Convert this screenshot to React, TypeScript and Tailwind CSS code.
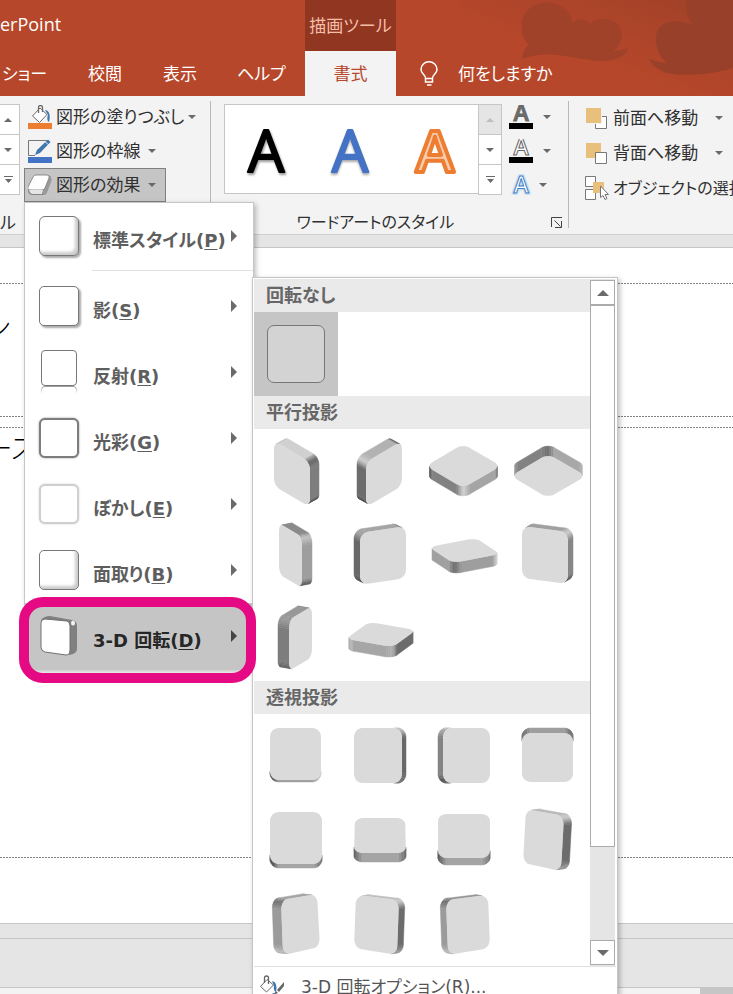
import React from "react";

type Point = [number, number];
type Quad = [Point, Point, Point, Point];

/* ---------- extruded rounded square used by the rotation presets ---------- */

interface SlabProps {
  label: string;
  /** corners of the front face, clockwise */
  face: Quad;
  /** offset of the back face */
  depth: Point;
  /** brightness of: side 1, corner, side 2, corner, side 3, corner, side 4, corner */
  shades: number[];
}

const STEPS = 8;

function outline(quad: Quad) {
  const radius = 0.17;
  const unit: { u: number; v: number }[] = [];
  const centres = [
    { u: 1 - radius, v: radius, from: -90 },
    { u: 1 - radius, v: 1 - radius, from: 0 },
    { u: radius, v: 1 - radius, from: 90 },
    { u: radius, v: radius, from: 180 },
  ];
  centres.forEach((c) => {
    for (let i = 0; i <= STEPS; i++) {
      const a = ((c.from + (90 * i) / STEPS) * Math.PI) / 180;
      unit.push({ u: c.u + radius * Math.cos(a), v: c.v + radius * Math.sin(a) });
    }
  });
  return unit.map(({ u, v }) => {
    const at = (k: 0 | 1) =>
      quad[0][k] * (1 - u) * (1 - v) + quad[1][k] * u * (1 - v) + quad[2][k] * u * v + quad[3][k] * (1 - u) * v;
    return { x: at(0), y: at(1) };
  });
}

function tone(shades: number[], corner: number, f: number) {
  const a = shades[corner * 2];
  const m = shades[corner * 2 + 1];
  const b = shades[(corner * 2 + 2) % 8];
  const value = f < 0.5 ? a + (m - a) * f * 2 : m + (b - m) * (f - 0.5) * 2;
  const n = Math.round(value);
  return `rgb(${n},${n},${n})`;
}

function Slab({ label, face, depth, shades }: SlabProps) {
  const pts = outline(face);
  const [dx, dy] = depth;
  const walls = pts.map((p, i) => {
    const q = pts[(i + 1) % pts.length];
    const facing = (q.y - p.y) * dx - (q.x - p.x) * dy;
    if (facing <= 0) return null;
    const corner = Math.floor(i / (STEPS + 1));
    const step = i % (STEPS + 1);
    const fill = step === STEPS ? tone(shades, corner, 1) : tone(shades, corner, (step + 0.5) / STEPS);
    return (
      <polygon
        key={i}
        points={`${p.x},${p.y} ${q.x},${q.y} ${q.x + dx},${q.y + dy} ${p.x + dx},${p.y + dy}`}
        fill={fill}
        stroke={fill}
        strokeWidth={0.5}
      />
    );
  });
  return (
    <button type="button" aria-label={label} className="size-[84px]">
      <svg viewBox="0 0 84 84" className="size-full" aria-hidden="true">
        {walls}
        <polygon points={pts.map((p) => `${p.x},${p.y}`).join(" ")} fill="#dadada" />
      </svg>
    </button>
  );
}

const parallel: SlabProps[] = [
  { label: "等角投影: 左下", face: [[20, 12], [56, 33], [56, 78], [20, 57]], depth: [9, -5], shades: [208, 100, 125, 70, 120, 120, 120, 190] },
  { label: "等角投影: 右上", face: [[28, 33], [64, 12], [64, 57], [28, 78]], depth: [-9, -5], shades: [178, 90, 120, 120, 120, 50, 108, 205] },
  { label: "等角投影: 上", face: [[41, 15], [79, 37], [41, 59], [4, 37]], depth: [0, 10], shades: [160, 90, 165, 210, 130, 80, 120, 120] },
  { label: "等角投影: 下", face: [[42, 25], [80, 47], [42, 69], [5, 47]], depth: [0, -10], shades: [168, 190, 160, 120, 120, 180, 130, 110] },
  { label: "不等角投影 1: 左", face: [[25, 10], [48, 24], [48, 75], [25, 61]], depth: [10, -2], shades: [138, 195, 158, 90, 120, 120, 120, 130] },
  { label: "不等角投影 1: 右", face: [[22, 20], [68, 13], [68, 65], [22, 72]], depth: [-6, -3], shades: [165, 120, 120, 120, 120, 70, 105, 160] },
  { label: "不等角投影 1: 上", face: [[54, 25], [78, 41], [31, 50], [7, 34]], depth: [0, 11], shades: [160, 215, 158, 105, 160, 150, 120, 120] },
  { label: "不等角投影 2: 左", face: [[16, 13], [62, 19], [62, 71], [16, 65]], depth: [5, -3], shades: [160, 205, 135, 80, 120, 120, 120, 120] },
  { label: "不等角投影 2: 右", face: [[35, 23], [58, 9], [58, 60], [35, 74]], depth: [-11, -2], shades: [152, 120, 120, 120, 120, 95, 125, 150] },
  { label: "不等角投影 2: 上", face: [[31, 25], [78, 33], [55, 50], [8, 42]], depth: [0, 11], shades: [160, 110, 108, 175, 166, 190, 120, 120] },
];

const perspective: SlabProps[] = [
  { label: "透視投影: 前面", face: [[16, 14], [67, 14], [67, 66], [16, 66]], depth: [0, 2], shades: [120, 120, 200, 200, 160, 80, 120, 120] },
  { label: "透視投影: 左", face: [[16, 14], [64, 14], [64, 69], [16, 69]], depth: [4, 0], shades: [200, 185, 105, 110, 120, 120, 120, 120] },
  { label: "透視投影: 右", face: [[21, 14], [68, 14], [68, 69], [21, 69]], depth: [-5, 0], shades: [200, 120, 120, 120, 120, 80, 132, 165] },
  { label: "透視投影: 下", face: [[16, 19], [67, 19], [67, 68], [16, 68]], depth: [0, -5], shades: [158, 110, 120, 120, 120, 120, 120, 110] },
  { label: "透視投影: 上", face: [[16, 14], [68, 14], [68, 66], [16, 66]], depth: [0, 4], shades: [120, 120, 120, 120, 165, 80, 90, 120] },
  { label: "透視投影 (緩い傾斜)", face: [[17, 20], [67, 20], [68, 55], [16, 55]], depth: [0, 9], shades: [120, 120, 90, 120, 164, 120, 90, 120] },
  { label: "透視投影 (急な傾斜)", face: [[16, 16], [68, 16], [68, 60], [16, 60]], depth: [0, 7], shades: [120, 120, 100, 130, 164, 110, 80, 120] },
  { label: "透視投影: 左向き (強)", face: [[20, 11], [58, 18], [55, 73], [17, 65]], depth: [8, -1], shades: [185, 200, 108, 150, 150, 120, 120, 170] },
  { label: "透視投影: 右向き (強)", face: [[27, 18], [63, 12], [66, 65], [29, 73]], depth: [-9, -1], shades: [165, 120, 120, 120, 150, 190, 155, 110] },
  { label: "透視投影: 左向き", face: [[18, 13], [61, 18], [59, 73], [16, 66]], depth: [6, -1], shades: [190, 200, 108, 150, 150, 120, 120, 170] },
  { label: "透視投影: 右向き", face: [[24, 18], [66, 13], [68, 66], [26, 73]], depth: [-6, -1], shades: [150, 120, 120, 120, 150, 190, 155, 110] },
];

/* ------------------------------- small icons ------------------------------- */

function Caret({ up = false, muted = false }: { up?: boolean; muted?: boolean }) {
  return (
    <svg viewBox="0 0 8 4" className="h-1 w-2 shrink-0" aria-hidden="true">
      <path d={up ? "M4 0 8 4H0z" : "M0 0h8L4 4z"} fill={muted ? "#bdbdbd" : "#6a6a6a"} />
    </svg>
  );
}

function MoreCaret() {
  return (
    <svg viewBox="0 0 9 8" className="h-2 w-[9px]" aria-hidden="true">
      <path d="M0 0h9v1H0zM1 3h7L4.500 7z" fill="#6a6a6a" />
    </svg>
  );
}

function FillIcon() {
  return (
    <svg viewBox="0 0 24 24" className="size-6" aria-hidden="true">
      <rect x="0" y="18" width="24" height="6" fill="#ed7d31" />
      <path d="M12 3 4.500 11l7 6.500L19 9.500z" fill="#fff" stroke="#6b6b6b" />
      <path d="M10.500 8V2.500a1.500 1.500 0 0 1 4 0V7" fill="none" stroke="#6b6b6b" strokeWidth="1.300" />
      <path d="M17 5c4 0 6 5 4 12-2-1-2-5-1-7z" fill="#3f76ad" />
    </svg>
  );
}

function OutlineIcon() {
  return (
    <svg viewBox="0 0 24 24" className="size-6" aria-hidden="true">
      <rect x="0" y="18" width="24" height="6" fill="#4472c4" />
      <path d="M19 1.500H.5v15H7" fill="none" stroke="#777" />
      <path d="m7 16 2-5L20 .5 22.500 3 12 14z" fill="#3f76ad" />
      <path d="m17 2.500 3 3" stroke="#f3f3f3" />
    </svg>
  );
}

function EffectIcon() {
  return (
    <svg viewBox="0 0 24 24" className="size-6" aria-hidden="true">
      <path d="M19 3q4-1 4 2 1 2-1 6l-3 8q-1 3-4 3H5q-5 0-5-5z" fill="#858585" />
      <path d="M15 16q3-3 4-13 4-1 4 2 1 2-1 6l-3 8q-1 3-4 3z" fill="#9a9a9a" />
      <path d="M8 2h11q3 0 2 3l-4 10q-1 2-3 2H3q-4 0-3-3L5 4q1-2 3-2z" fill="#fff" stroke="#777" strokeWidth=".8" />
      <path d="M1 17h14l-1 4H5q-3 0-4-4z" fill="#e4e4e4" />
    </svg>
  );
}

function ForwardIcon() {
  return (
    <svg viewBox="0 0 24 24" className="size-6" aria-hidden="true">
      <path d="M10.500 10.500h11v12h-11z" fill="#fff" stroke="#777" />
      <path d="M.5 1.500h16v16H.5z" fill="#e8c07c" stroke="#f3f3f3" />
    </svg>
  );
}

function BackwardIcon() {
  return (
    <svg viewBox="0 0 24 24" className="size-6" aria-hidden="true">
      <path d="M1 2h15v15H1z" fill="#e8c07c" />
      <path d="M10.500 11.500h11v11h-11z" fill="#fff" stroke="#777" />
    </svg>
  );
}

function SelectionIcon() {
  return (
    <svg viewBox="0 0 24 24" className="size-6" aria-hidden="true">
      <path d="M.5.500h10v10H.5zM.5 13.500h10v10H.5z" fill="#fff" stroke="#777" />
      <path d="M8 6h11v11H8z" fill="#e8c07c" />
      <path d="M15.500 10v11.500l2.500-2 2 4 2-1-2-4h3.500z" fill="#fff" stroke="#777" />
    </svg>
  );
}

function FormatIcon() {
  return (
    <svg viewBox="0 0 26 24" className="h-6 w-[26px]" aria-hidden="true">
      <path d="M7 4.500.500 11.500l6 5.500 7-7z" fill="#fff" stroke="#666" />
      <path d="M4.500 8V3q0-2 2-2t2 2v6" fill="none" stroke="#666" strokeWidth="1.300" />
      <path d="M12 6q6 1 4 11-3-2-2-6z" fill="#3f76ad" />
      <path d="m24 7-7 8 2 2 5-6zM16 16l-3 4 5-2z" fill="#666" />
      <circle cx="14" cy="21" r="2.500" fill="#fff" stroke="#3f76ad" />
    </svg>
  );
}

function RotatedIcon() {
  return (
    <svg viewBox="0 0 42 42" className="size-[42px]" aria-hidden="true">
      <path d="M3 5Q6 1 12 1l22 4q5 1 5 6v23q0 5-8 6z" fill="#808080" />
      <path d="M7 4 29 6q3 1 3 5v24q0 5-4 5L7 37q-4-1-4-5V8q0-4 4-4z" fill="#fff" stroke="#707070" />
      <ellipse cx="35" cy="8" rx="2" ry="2.500" fill="#f4f4f4" />
    </svg>
  );
}

function LetterIcon({ kind }: { kind: "fill" | "outline" | "glow" }) {
  return (
    <svg viewBox="0 0 24 24" className="size-6" aria-hidden="true">
      {kind === "glow" && (
        <text x="12" y="20" textAnchor="middle" fontSize="23" fontWeight="600" fill="#fff" stroke="#cfe0f2" strokeWidth="4" strokeLinejoin="round">A</text>
      )}
      <text
        x="12"
        y={kind === "glow" ? 20 : 16}
        textAnchor="middle"
        fontSize="23"
        fontWeight="600"
        fill={kind === "fill" ? "#6a6a6a" : "#fff"}
        stroke={kind === "fill" ? "#6a6a6a" : kind === "outline" ? "#666" : "#3b7fc4"}
        strokeWidth="1"
      >
        A
      </text>
      {kind !== "glow" && <rect x="0" y="18" width="24" height="6" fill="#000" />}
    </svg>
  );
}

/* --------------------------------- ribbon ---------------------------------- */

function GalleryScroll({ muted = false }: { muted?: boolean }) {
  return (
    <div className="flex h-[91px] w-6 shrink-0 flex-col divide-y divide-[#c6c6c6] border border-[#c6c6c6] bg-white">
      <button type="button" aria-label="前の行" className={`flex flex-1 items-center justify-center ${muted ? "bg-[#e5e5e5]" : ""}`}>
        <Caret up muted={muted} />
      </button>
      <button type="button" aria-label="次の行" className="flex flex-1 items-center justify-center">
        <Caret />
      </button>
      <button type="button" aria-label="その他" className="flex flex-1 items-center justify-center">
        <MoreCaret />
      </button>
    </div>
  );
}

function WordArt({ fill, stroke, width, weight, shadow }: { fill: string; stroke: string; width: number; weight: number; shadow: string }) {
  return (
    <button type="button" aria-label="ワードアート" className="flex flex-1 items-center justify-center">
      <svg viewBox="0 0 60 60" className={`size-[60px] ${shadow}`} aria-hidden="true">
        <text x="29" y="53" textAnchor="middle" fontSize="58" fontWeight={weight} fill={fill} stroke={stroke} strokeWidth={width} strokeLinejoin="round">
          A
        </text>
      </svg>
    </button>
  );
}

/* ---------------------------------- menu ----------------------------------- */

const items = [
  { name: "影", hotkey: "S", box: "size-10 rounded-[5px] border border-[#777] bg-white shadow-[2px_2px_2px_#aaa]" },
  { name: "反射", hotkey: "R", box: "reflection" },
  { name: "光彩", hotkey: "G", box: "size-10 rounded-[6px] border-2 border-[#7d7d7d] bg-white shadow-[0_0_2px_#888]" },
  { name: "ぼかし", hotkey: "E", box: "size-10 rounded-[6px] border-2 border-[#cfcfcf] bg-white shadow-[0_0_2px_#ccc]" },
  { name: "面取り", hotkey: "B", box: "size-10 rounded-[5px] border border-[#777] bg-white shadow-[inset_-3px_-3px_3px_#ccc]" },
  { name: "3-D 回転", hotkey: "D", box: "rotated" },
];

function MenuIcon({ box }: { box: string }) {
  if (box === "rotated") return <RotatedIcon />;
  if (box === "reflection")
    return (
      <span className="flex flex-col items-center">
        <span className="size-9 rounded-[4px] border border-[#777] bg-white" />
        <span className="h-2 w-9 rounded-t-[4px] border border-b-0 border-[#999] mask-b-from-0" />
      </span>
    );
  return <span className={box} />;
}

function MenuItem({ name, hotkey, box, active = false }: { name: string; hotkey: string; box: string; active?: boolean }) {
  return (
    <button
      type="button"
      role="menuitem"
      className={`flex h-[66px] w-full items-center pr-4 pl-[13px] text-left text-lg leading-6 font-bold ${active ? "bg-[#c5c5c5] text-[#262626]" : "text-[#5e5e5e]"}`}
    >
      <span className="flex w-[42px] justify-center">
        <MenuIcon box={box} />
      </span>
      <span className="ml-[13px] flex-1 pt-2.5 whitespace-nowrap">
        {name}(<u className="underline-offset-2">{hotkey}</u>)
      </span>
      <svg viewBox="0 0 6 12" className="h-3 w-1.5 shrink-0" aria-hidden="true">
        <path d="M0 0l6 6-6 6z" fill={active ? "#444" : "#6a6a6a"} />
      </svg>
    </button>
  );
}

function Heading({ children }: { children: React.ReactNode }) {
  return <h3 className="flex h-[33px] items-center bg-[#eaeaea] pl-3 text-lg leading-6 font-bold text-[#666]">{children}</h3>;
}

function RotationPanel() {
  return (
    <section aria-label="3-D 回転" className="absolute top-[74px] left-[227px] w-[366px] border border-[#c6c6c6] bg-white p-px shadow-[2px_2px_5px_rgba(0,0,0,0.25)]">
      <div className="flex">
        <div className="w-[336px]">
          <Heading>回転なし</Heading>
          <button type="button" aria-label="回転なし" className="flex size-[84px] items-center justify-center bg-[#c5c5c5]">
            <span className="size-[58px] rounded-[7px] border border-[#777] bg-[#d3d3d3]" />
          </button>
          <Heading>平行投影</Heading>
          <div className="grid grid-cols-4">
            {parallel.map((p) => (
              <Slab key={p.label} {...p} />
            ))}
          </div>
          <Heading>透視投影</Heading>
          <div className="grid grid-cols-4">
            {perspective.map((p) => (
              <Slab key={p.label} {...p} />
            ))}
          </div>
        </div>
        <div className="flex w-[25px] flex-col bg-[#e5e5e5] py-px">
          <button type="button" aria-label="上へスクロール" className="flex h-[25px] items-center justify-center border border-[#ababab] bg-white">
            <svg viewBox="0 0 12 6" className="h-1.5 w-3" aria-hidden="true"><path d="M6 0l6 6H0z" fill="#6a6a6a" /></svg>
          </button>
          <div className="h-[542px] border border-[#ababab] bg-white" />
          <button type="button" aria-label="下へスクロール" className="mt-auto flex h-[25px] items-center justify-center border border-[#ababab] bg-white">
            <svg viewBox="0 0 12 6" className="h-1.5 w-3" aria-hidden="true"><path d="M0 0h12L6 6z" fill="#6a6a6a" /></svg>
          </button>
        </div>
      </div>
      <button type="button" className="flex h-10 w-full items-center border-t border-[#e1e1e1] pl-1.5 text-[17px] leading-6 whitespace-nowrap text-[#555]">
        <FormatIcon />
        <span className="ml-[15px]">3-D 回転オプション(R)...</span>
      </button>
    </section>
  );
}

function EffectsMenu() {
  return (
    <div
      role="menu"
      className="absolute top-full left-0 z-20 w-[230px] border border-[#c6c6c6] bg-white font-['DejaVu_Sans','Noto_Sans_CJK_JP',sans-serif] shadow-[2px_2px_5px_rgba(0,0,0,0.25)]"
    >
      <MenuItem name="標準スタイル" hotkey="P" box="size-10 rounded-[6px] border border-[#777] bg-white shadow-[inset_-3px_-3px_3px_#ccc,2px_2px_2px_#aaa]" />
      <div className="mt-px mb-0.5 ml-[67px] h-px bg-[#e1e1e1]" />
      {items.map((item) => (
        <MenuItem key={item.hotkey} {...item} active={item.hotkey === "D"} />
      ))}
      <RotationPanel />
      <div className="pointer-events-none absolute -bottom-3.5 -left-1.5 h-[86px] w-[237px] rounded-3xl border-10 border-[#e60984]" />
    </div>
  );
}

function Dashes() {
  return <div className="h-px shrink-0 bg-[repeating-linear-gradient(90deg,#808080_0_2px,transparent_2px_3px)]" />;
}

function Header() {
  return (
    <header className="relative flex h-24 shrink-0 bg-[#b7472a] text-[17px] leading-6 text-white">
      <svg viewBox="0 0 343 96" className="absolute top-0 right-0 h-24 w-[343px]" aria-hidden="true">
        <defs>
          <linearGradient id="dusk" x1="0" x2="1" y1="1" y2="0">
            <stop offset=".35" stopColor="#a8442a" stopOpacity="0" />
            <stop offset="1" stopColor="#9c4028" />
          </linearGradient>
        </defs>
        <path d="M70 0h273v96H70z" fill="url(#dusk)" />
        <path d="M132 59c1-8 3-11 7-14C129 35 129 18 139 9c13-12 40-7 44 14 6-6 14-4 17 1 10-10 31-5 32 10 0 7-3 13-9 17 6 0 10-2 15-3-2 8-12 13-25 13-27-1-53-13-81-2z" fill="#a0412a" />
        <path d="M297 0h46v68c-20 6-47 9-66 5-9-3-15-8-18-14 5 1 10 4 18 4-12-9-15-31-5-38 9-6 20-4 31 0-6-8-8-17-6-25z" fill="#98402a" />
      </svg>
      <div className="relative flex w-[305px] flex-col">
        <div className="flex h-[51px] items-center pb-1 text-lg leading-6">erPoint</div>
        <nav className="flex h-[45px] items-center gap-[39px] whitespace-nowrap">
          <button type="button" className="w-12 pr-px text-right">ショー</button>
          <button type="button" className="w-9">校閲</button>
          <button type="button" className="w-9">表示</button>
          <button type="button">ヘルプ</button>
        </nav>
      </div>
      <div className="relative w-[91px] text-center">
        <div className="flex h-[51px] items-center justify-center bg-[#913621] text-[#f4bfa9]">描画ツール</div>
        <button type="button" className="h-[45px] w-full bg-[#f3f3f3] text-[#b7472a]">書式</button>
      </div>
      <div className="relative flex h-[45px] items-center self-end pl-6">
        <svg viewBox="0 0 18 25" className="h-[25px] w-[18px]" fill="none" stroke="#fff" strokeWidth="1.500" aria-hidden="true">
          <path d="M5.500 17.500C5.500 13 1 13 1 8.500a8 7.700 0 0 1 16 0c0 4.500-4.500 4.500-4.500 9zM5.500 17.500V21h7v-3.500M7 24h4.500" />
        </svg>
        <button type="button" className="ml-5 whitespace-nowrap">何をしますか</button>
      </div>
    </header>
  );
}

function Ribbon() {
  return (
    <div className="relative z-10 flex h-[139px] shrink-0 border-b border-[#cfcfcf] bg-[#f3f3f3] text-[17px] leading-6 whitespace-nowrap text-[#303030]">
      <div className="flex w-5 shrink-0 flex-col items-end pt-2">
        <GalleryScroll />
        <span className="mt-4 w-full">ル</span>
      </div>
      <div className="ml-1 w-[186px] shrink-0 pt-1">
        <button type="button" className="flex h-[34px] items-center gap-1 pl-1">
          <FillIcon />
          図形の塗りつぶし
          <Caret />
        </button>
        <button type="button" className="flex h-[34px] items-center gap-1 pl-1">
          <OutlineIcon />
          図形の枠線
          <span className="pl-1"><Caret /></span>
        </button>
        <div className="relative w-[142px]">
          <button type="button" className="flex h-[34px] w-full items-center gap-1 border border-[#808080] bg-[#c5c5c5] pl-[3px]">
            <EffectIcon />
            図形の効果
            <span className="pl-1"><Caret /></span>
          </button>
          <EffectsMenu />
        </div>
      </div>
      <div className="mt-[5px] h-[127px] w-px shrink-0 bg-[#b8b8b8]" />
      <div className="flex w-[357px] shrink-0 flex-col pt-2 pl-[13px]">
        <div className="flex">
          <div className="-mr-px flex h-[90px] w-[255px] border border-[#c6c6c6] bg-white">
            <WordArt fill="#000" stroke="#000" width={2} weight={400} shadow="drop-shadow-[1px_2px_1px_#999]" />
            <WordArt fill="#4472c4" stroke="#4472c4" width={2} weight={400} shadow="drop-shadow-[0_2px_1px_#aaa]" />
            <WordArt fill="#f8cbad" stroke="#ed7d31" width={4} weight={600} shadow="" />
          </div>
          <GalleryScroll muted />
          <div className="-mt-1 ml-[7px] flex flex-col">
            <button type="button" aria-label="文字の塗りつぶし" className="flex h-[34px] items-center gap-2.5"><LetterIcon kind="fill" /><Caret /></button>
            <button type="button" aria-label="文字の輪郭" className="flex h-[34px] items-center gap-2.5"><LetterIcon kind="outline" /><Caret /></button>
            <button type="button" aria-label="文字の効果" className="flex h-[34px] items-center gap-1.5"><LetterIcon kind="glow" /><Caret /></button>
          </div>
        </div>
        <div className="mt-2 flex items-center">
          <span className="flex-1 pr-6 text-center text-base leading-6">ワードアートのスタイル</span>
          <button type="button" aria-label="ワードアートのスタイルの詳細" className="mr-1.5">
            <svg viewBox="0 0 11 11" className="size-[11px]" fill="none" stroke="#444" aria-hidden="true">
              <path d="M.5 10V.5H11M3.500 3.500l6 6M10.500 4v6.500H4" />
            </svg>
          </button>
        </div>
      </div>
      <div className="mt-[5px] h-[127px] w-px shrink-0 bg-[#b8b8b8]" />
      <div className="min-w-0 flex-1 overflow-hidden pt-1 pl-4">
        <button type="button" className="flex h-[35px] w-[138px] items-center gap-1"><ForwardIcon />前面へ移動<span className="ml-auto"><Caret /></span></button>
        <button type="button" className="flex h-[35px] w-[138px] items-center gap-1"><BackwardIcon />背面へ移動<span className="ml-auto"><Caret /></span></button>
        <button type="button" className="flex h-[35px] items-center gap-1 text-base leading-6"><SelectionIcon />オブジェクトの選択</button>
      </div>
    </div>
  );
}

export default function App() {
  return (
    <div className="flex h-screen w-full flex-col overflow-hidden bg-[#e5e5e5] font-['Open_Sans','Noto_Sans_CJK_JP',sans-serif] [font-feature-settings:'palt']">
      <Header />
      <Ribbon />
      <main className="mt-3 flex flex-1 flex-col border-y border-[#c6c6c6] bg-white pt-[35px] pb-[65px] text-[28px] leading-9 font-light text-black">
        <Dashes />
        <div className="h-[132px] pt-[25px]">
          <p className="flex w-2.5 justify-end whitespace-nowrap">ン</p>
        </div>
        <Dashes />
        <div className="h-2.5" />
        <Dashes />
        <div className="flex-1 pt-0.5">
          <p className="flex w-9 justify-end whitespace-nowrap">ース</p>
        </div>
        <Dashes />
      </main>
      <div className="h-3.5 shrink-0" />
      <div className="h-[49px] shrink-0 border-t border-[#c6c6c6]" />
      <div className="flex h-[7px] shrink-0 border-t border-[#c6c6c6] bg-[#f3f3f3]">
        <div className="ml-auto w-[33px] bg-[#c6c6c6]" />
      </div>
    </div>
  );
}
